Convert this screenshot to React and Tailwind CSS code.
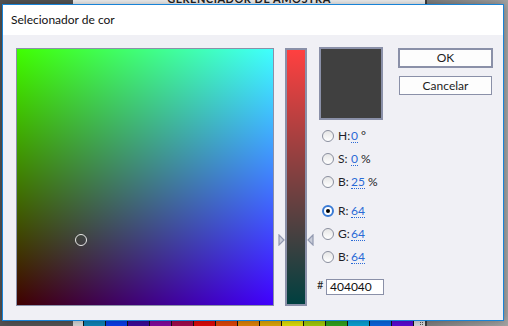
import React from "react";

const swatches = [
  "#0f82b4", "#0a3ce6", "#3c0a96", "#820a9b", "#a00a4b", "#dc0a0a", "#dc460a",
  "#dc820a", "#dca50a", "#dcdc0a", "#a0c80a", "#32a01e", "#0aa0d2", "#0a64dc", "#5a0ad2",
];

function Radio({ checked }) {
  if (checked) {
    return (
      <div className="ml-[3px] w-[12px] h-[12px] rounded-full border-2 border-[#3a7bd5] bg-white flex items-center justify-center shrink-0">
        <div className="w-[4px] h-[4px] rounded-full bg-black" />
      </div>
    );
  }
  return (
    <div className="ml-[3px] w-[12px] h-[12px] rounded-full border border-[#8a8f9e] bg-[linear-gradient(to_bottom,#e6e6e6,#ffffff)] shrink-0" />
  );
}

function Row({ label, value, unit, checked }) {
  return (
    <div className="h-[22.67px] flex items-center">
      <Radio checked={checked} />
      <span className="ml-[4px] w-[13px] text-[#1e1e28]">{label}</span>
      <span className="text-[#2a6ad6] border-b border-dotted border-[#2a6ad6] leading-[13px]">{value}</span>
      {unit && <span className="ml-[3px] text-[#1e1e28]">{unit}</span>}
    </div>
  );
}

export default function App() {
  return (
    <div className="relative w-[508px] h-[326px] overflow-hidden font-['Lato','Liberation_Sans',sans-serif] text-[12px]">
      {/* background desktop */}
      <div className="flex w-full h-full">
        <div className="w-[73px] h-full bg-[#535353]" />
        <div className="w-[352px] h-full bg-[#f0f0f0] flex flex-col justify-between">
          <div className="mt-[-9px] h-[13px] text-center font-bold text-[11px] text-[#222] tracking-[0.5px]">GERENCIADOR DE AMOSTRA</div>
          <div className="flex h-[10px]">
            <div className="w-[10px] bg-[#d4d4d4]" />
            {swatches.map((c) => (
              <div key={c} className="w-[22px] border-l border-[#111]" style={{ backgroundColor: c }} />
            ))}
            <div className="flex-1 bg-[#d8d8d8] border-l border-[#111] flex justify-end items-end pr-[2px] pb-[1px]">
              <div className="grid grid-cols-2 gap-[1px]">
                <div className="w-[1px] h-[1px] bg-[#555]" />
                <div className="w-[1px] h-[1px] bg-[#555]" />
                <div className="w-[1px] h-[1px] bg-[#555]" />
                <div className="w-[1px] h-[1px] bg-[#555]" />
              </div>
            </div>
          </div>
        </div>
        <div className="w-[2px] h-full bg-[#3c3c3c]" />
        <div className="flex-1 h-full bg-[linear-gradient(to_right,#7d7d7d,#a3a3a3)]" />
      </div>

      {/* dialog */}
      <div className="absolute left-[2px] top-[4px] w-[502px] h-[317px] border border-[#1883d7] bg-[#f0f0f5] flex flex-col shadow-[0_0_8px_rgba(0,0,0,0.3)]">
        <div className="h-[30px] bg-white flex items-center pl-[8px] text-[12px] text-[#111]">Selecionador de cor</div>
        <div className="flex pl-[13px] pt-[13px]">
          {/* colour field */}
          <div className="relative w-[258px] h-[258px] border border-[#8a90a8] bg-[linear-gradient(to_bottom,#00ff00,#000000),linear-gradient(to_right,#400000,#4000ff)] bg-blend-screen shrink-0">
            <div className="absolute left-[58px] top-[185px] w-[12px] h-[12px] rounded-full border border-[#e8e8e8]" />
          </div>

          {/* slider */}
          <div className="relative ml-[11px] w-[22px] h-[258px] border-2 border-[#8a90a8] bg-[linear-gradient(to_bottom,#ff4040,#004040)] shrink-0">
            <svg className="absolute left-[-9px] top-[184px]" width="7" height="12" viewBox="0 0 7 12">
              <path d="M1 1 L6 6 L1 11 Z" fill="#c8ccd8" stroke="#9299b0" strokeWidth="1.2" />
            </svg>
            <svg className="absolute left-[20px] top-[184px]" width="7" height="12" viewBox="0 0 7 12">
              <path d="M6 1 L1 6 L6 11 Z" fill="#c8ccd8" stroke="#9299b0" strokeWidth="1.2" />
            </svg>
          </div>

          {/* values */}
          <div className="ml-[12px] w-[66px] flex flex-col shrink-0">
            <div className="mt-[-1px] w-[64px] h-[73px] border-2 border-[#8a90a8] bg-[#404040]" />
            <div className="mt-[5px]">
              <Row label="H:" value="0" unit="°" />
              <Row label="S:" value="0" unit="%" />
              <Row label="B:" value="25" unit="%" />
            </div>
            <div className="mt-[7px]">
              <Row label="R:" value="64" checked />
              <Row label="G:" value="64" />
              <Row label="B:" value="64" />
            </div>
            <div className="mt-[11px] flex items-start">
              <span className="ml-[-2px] w-[9px] text-[11px] leading-[12px] text-[#222]">#</span>
              <div className="w-[58px] h-[16px] border border-[#8a90a8] bg-white flex items-center pl-[3px] text-[12px] text-[#111]">404040</div>
            </div>
          </div>

          {/* buttons */}
          <div className="ml-[13px] flex flex-col">
            <div className="w-[95px] h-[20px] border-2 border-[#8a90a8] bg-[#fdfdfd] flex items-center justify-center text-[#1e1e1e]">OK</div>
            <div className="mt-[8px] ml-[1px] w-[93px] h-[19px] border border-[#8a90a8] bg-[#fdfdfd] flex items-center justify-center text-[#1e1e1e]">Cancelar</div>
          </div>
        </div>
      </div>
    </div>
  );
}
